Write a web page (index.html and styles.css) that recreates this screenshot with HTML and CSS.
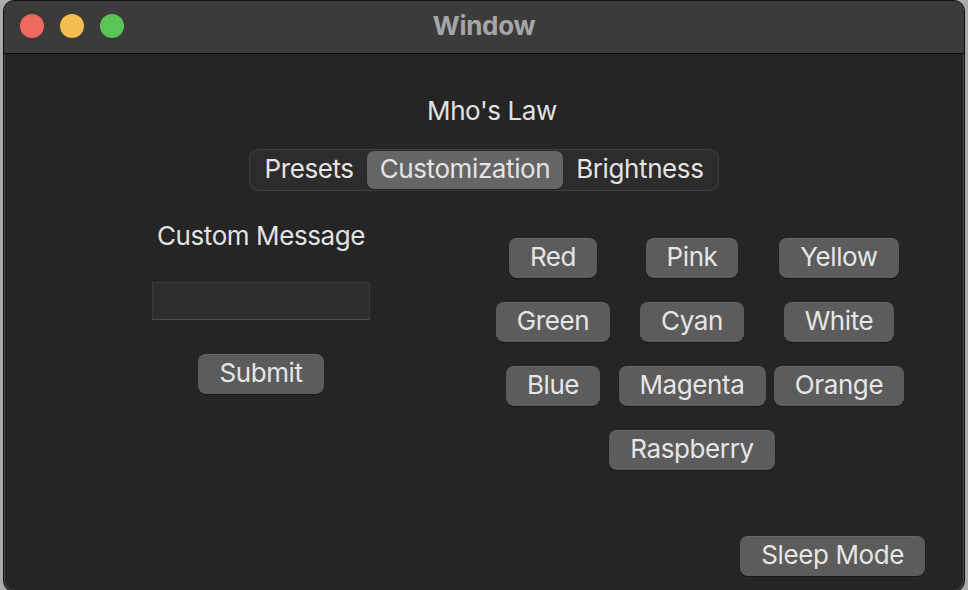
FILE: index.html
```html
<!DOCTYPE html>
<html lang="en">
  <head>
    <meta charset="UTF-8" />
    <meta name="viewport" content="width=device-width, initial-scale=1.0" />
    <title>Mho's Law</title>
    <link rel="stylesheet" href="styles.css">
  </head>
  <body>
    <div class="window">
      <!-- Title bar with traffic lights -->
      <div class="titlebar">
        <div class="lights">
          <span class="light close"></span>
          <span class="light minimize"></span>
          <span class="light zoom"></span>
        </div>
        <div class="title">Window</div>
      </div>

      <div class="content">
        <h1 class="heading">Mho's Law</h1>

        <div class="segmented">
          <button class="segment">Presets</button>
          <button class="segment selected">Customization</button>
          <button class="segment">Brightness</button>
        </div>

        <div class="main">
          <div class="custom">
            <label class="custom-label" for="customMessage">Custom Message</label>
            <input type="text" id="customMessage" class="custom-input" autocomplete="off" />
            <button class="btn">Submit</button>
          </div>

          <div class="colors">
            <div class="color-grid">
              <button class="btn">Red</button>
              <button class="btn">Pink</button>
              <button class="btn">Yellow</button>
              <button class="btn">Green</button>
              <button class="btn">Cyan</button>
              <button class="btn">White</button>
              <button class="btn">Blue</button>
              <button class="btn">Magenta</button>
              <button class="btn">Orange</button>
              <button class="btn wide">Raspberry</button>
            </div>
          </div>
        </div>

        <div class="footer">
          <button class="btn">Sleep Mode</button>
        </div>
      </div>
    </div>
  </body>
</html>
```

FILE: styles.css
```css
body {
  margin: 0;
  height: 590px;
  overflow: hidden;
  background-color: #ababab;
  font-family: "Inter", "Noto Sans", sans-serif;
  font-size: 26px;
  color: #e2e2e2;
}
.window {
  box-sizing: border-box;
  margin-left: 3px;
  width: 962px;
  height: 592px;
  border: 1px solid #0e0e0e;
  border-radius: 11px;
  background-color: #252525;
  box-shadow: inset 0 0 0 1px #4a4a4a;
  overflow: hidden;
  display: flex;
  flex-direction: column;
}

/* Title bar */
.titlebar {
  height: 52px;
  flex-shrink: 0;
  background-color: #3b3b3b;
  border-bottom: 1px solid #0b0b0b;
  display: grid;
  grid-template-columns: 1fr auto 1fr;
  align-items: start;
}
.lights {
  display: flex;
  gap: 16px;
  margin: 13px 0 0 16px;
}
.light {
  width: 24px;
  height: 24px;
  border-radius: 50%;
}
.close {
  background-color: #ee6a5e;
}
.minimize {
  background-color: #f5bf4f;
}
.zoom {
  background-color: #5ac555;
}
.title {
  margin-top: 9px;
  line-height: 32px;
  font-weight: 700;
  color: #a6a6a6;
  letter-spacing: -0.3px;
}

/* Content */
.content {
  flex: 1;
  display: flex;
  flex-direction: column;
  align-items: center;
}
.heading {
  margin: 41px 0 0;
  padding-left: 16px;
  font-size: 26px;
  font-weight: 400;
  line-height: 32px;
  letter-spacing: -0.4px;
}
.segmented {
  margin-top: 22px;
  display: flex;
  padding: 1px;
  height: 42px;
  box-sizing: border-box;
  background-color: #2c2c2c;
  border: 1px solid #3f3f3f;
  border-radius: 9px;
}
.segment {
  font: inherit;
  letter-spacing: -0.4px;
  color: #e4e4e4;
  background: none;
  border: none;
  padding: 0 13px 2px;
  border-radius: 7px;
  line-height: 36px;
}
.segment.selected {
  background-color: #656565;
  box-shadow: 0 1px 1px rgba(0, 0, 0, 0.35);
}

.main {
  margin-top: 29px;
  align-self: stretch;
  display: flex;
  padding-left: 142px;
  gap: 120px;
}
.custom {
  width: 230px;
  display: flex;
  flex-direction: column;
  align-items: center;
}
.custom-label {
  line-height: 32px;
  letter-spacing: -0.4px;
}
.custom-input {
  margin-top: 30px;
  box-sizing: border-box;
  width: 218px;
  height: 38px;
  background-color: #2d2d2d;
  border: 1px solid #3a3a3a;
  border-bottom-color: #4d4d4d;
  color: #e2e2e2;
  font: inherit;
  outline: none;
}
.custom .btn {
  margin-top: 34px;
}

.btn {
  font: inherit;
  letter-spacing: -0.4px;
  color: #e6e6e6;
  background-color: #5c5c5c;
  border: none;
  border-radius: 8px;
  height: 40px;
  padding: 0 21px 3px;
  box-shadow: 0 1px 1px rgba(0, 0, 0, 0.4), inset 0 1px 0 rgba(255, 255, 255, 0.07);
}

.colors {
  margin-top: 18px;
}
.color-grid {
  display: grid;
  grid-template-columns: 114px 146px 130px;
  column-gap: 9px;
  row-gap: 24px;
  justify-items: center;
}
.color-grid .wide {
  grid-column: 2;
}

.footer {
  align-self: stretch;
  display: flex;
  justify-content: flex-end;
  margin-top: 66px;
  padding-right: 39px;
}
```
